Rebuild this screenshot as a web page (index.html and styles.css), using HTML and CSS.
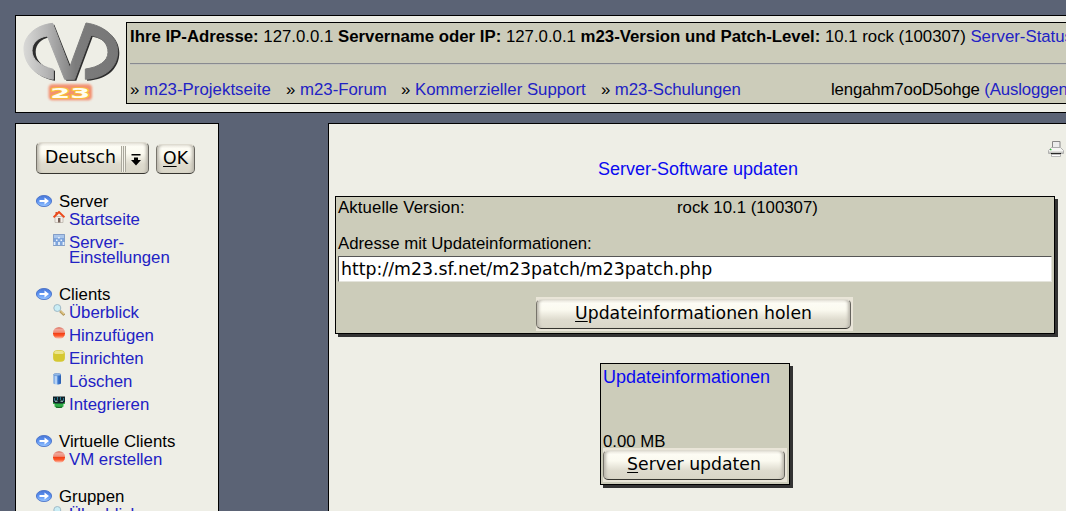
FILE: index.html
```html
<!DOCTYPE html>
<html lang="de">
<head>
<meta charset="utf-8">
<title>m23 – Server-Software updaten</title>
<link rel="stylesheet" href="styles.css">
</head>
<body>
<svg width="0" height="0" class="defs">
  <defs>
    <linearGradient id="gBlue" x1="0" y1="0" x2="0" y2="1"><stop offset="0" stop-color="#4b78d6"/><stop offset=".5" stop-color="#5b92f2"/><stop offset="1" stop-color="#9cc8ff"/></linearGradient>
    <linearGradient id="gRed" x1="0" y1="0" x2="0" y2="1"><stop offset="0" stop-color="#dc6a58"/><stop offset=".2" stop-color="#f0a598"/><stop offset=".45" stop-color="#f08a74"/><stop offset=".5" stop-color="#f03c14"/><stop offset=".75" stop-color="#ff5a2c"/><stop offset="1" stop-color="#f6d0c4"/></linearGradient>
    <linearGradient id="gLogo" x1="0" y1="0" x2="1" y2="0"><stop offset="0" stop-color="#d8d8d6"/><stop offset=".25" stop-color="#b4b4b4"/><stop offset=".55" stop-color="#7c7c7c"/><stop offset="1" stop-color="#777"/></linearGradient>
    <linearGradient id="gBin" x1="0" y1="0" x2="1" y2="0"><stop offset="0" stop-color="#5a92dc"/><stop offset=".35" stop-color="#d4e8fc"/><stop offset=".6" stop-color="#3e7cd4"/><stop offset="1" stop-color="#2a5cae"/></linearGradient>
    <filter id="glow" x="-20%" y="-30%" width="140%" height="160%"><feGaussianBlur stdDeviation="2.5"/></filter>
    <symbol id="arrow" viewBox="0 0 16 12"><ellipse cx="8" cy="6" rx="7.6" ry="5.6" fill="url(#gBlue)" stroke="#3e68c4" stroke-width=".8"/><path d="M3.5 5h5V2.6L13 6 8.500 9.400V7h-5z" fill="#fff"/></symbol>
    <symbol id="home" viewBox="0 0 12 12"><path d="M2 5.500h8V11.500H2z" fill="#f3eee8" stroke="#b5ada5" stroke-width=".7"/><path d="M2.500 1h1.700v3H2.500z" fill="#d8522c"/><path d="M.6 6.300 6 1l5.400 5.300" fill="none" stroke="#ec4a1c" stroke-width="1.900"/><path d="M5 7h2.400v4.500H5z" fill="#776258"/></symbol>
    <symbol id="prefs" viewBox="0 0 12 12"><path d="M.4.4h11.200v11.200H.4z" fill="#7fa5dc" stroke="#7391be" stroke-width=".8"/><path d="M1 1h10v3H1z" fill="#aac6eb"/><path d="M1.500 11V8M6 11V8M10.500 11V8" stroke="#e6effb" stroke-width="1.800"/><path d="M3 5.500h1.500v1.500H3zM7.500 5.500H9v1.500H7.500zM5.200 3h1.500v1.500H5.200z" fill="#f0f5fc"/></symbol>
    <symbol id="find" viewBox="0 0 12 12"><path d="m7 7 4.300 4" stroke="#b79a5c" stroke-width="2.400"/><path d="m7.500 7 3.500 3.200" stroke="#f2dc98" stroke-width="1"/><circle cx="4.300" cy="4" r="3.500" fill="#c9edf5" stroke="#9fb9c6"/></symbol>
    <symbol id="red" viewBox="0 0 12 12"><rect x="0" y=".3" width="12" height="11.400" rx="5.500" ry="5.200" fill="url(#gRed)"/></symbol>
    <symbol id="yellow" viewBox="0 0 12 12"><rect x=".1" y=".3" width="11.800" height="11.400" rx="4" fill="#d5c832"/><rect x="1.200" y="1" width="9.600" height="3" rx="1.500" fill="#ece58d"/></symbol>
    <symbol id="bin" viewBox="0 0 12 12"><path d="M.5 1.500v9c1.500 1.300 6 1.300 7.500 0v-9z" fill="url(#gBin)"/><ellipse cx="4.250" cy="1.600" rx="3.700" ry="1.200" fill="#92b9e8" stroke="#4f7fc2" stroke-width=".5"/></symbol>
    <symbol id="integrate" viewBox="0 0 12 12"><path d="M0 5h12v3H10.500v2.500L8.500 12h-5l-2-1.500V8H0z" fill="#2fae46"/><path d="M0 .5h12v5.500L10 7.500H2L0 6z" fill="#102028"/><path d="M1.500 2v3m3-4v3m3-3v3m3-2v3" stroke="#28788c" stroke-width="1"/><path d="M2 5.200h2.500m3 0H10" stroke="#b9dce0"/><path d="M3 11q3 1 6 0" fill="none" stroke="#175c26"/></symbol>
    <symbol id="printer" viewBox="0 0 16 16"><path d="M4.500.5h7.500v6h-7.500z" fill="#ececec" stroke="#888"/><path d="M3.500 6.500h9L15.500 9.500v3H.5V9.500z" fill="#f6f6f4" stroke="#aaa" stroke-width=".9"/><path d="M1 10.500h14v1.500H1z" fill="#c8c8c5"/><path d="M3 12h10v1.300H3z" fill="#111"/><path d="M3.500 13.300h9v2.200h-9z" fill="#fff" stroke="#aaa" stroke-width=".8"/><path d="M2 8h1.500v1.200H2z" fill="#32c83c"/></symbol>
  </defs>
</svg>

<header class="panel header">
  <svg class="logo" viewBox="0 0 315 270" role="img">
    <path transform="translate(5 4)" fill="#2e2e2e" d="M98 16C40 22 10 60 12 95C14 145 55 178 100 184V154C65 145 42 125 42 98C42 75 58 60 82 54L134 184H164L213 52C250 58 264 80 264 103C264 130 235 148 196 153V184C260 180 293 145 293 100C293 55 250 22 198 15L149 145Z"/>
    <path fill="url(#gLogo)" stroke="url(#gLogo)" stroke-width="3" d="M98 16C40 22 10 60 12 95C14 145 55 178 100 184V154C60 143 36 125 36 98C36 75 54 58 82 54L134 184H164L213 52C250 58 264 80 264 103C264 130 235 148 196 153V184C260 180 293 145 293 100C293 55 250 22 198 15L149 148Z"/>
    <rect x="86" y="199" width="130" height="48" rx="12" fill="#f4805c" opacity=".85" filter="url(#glow)"/>
    <text class="logo-num" x="91" y="240" textLength="120" lengthAdjust="spacingAndGlyphs">23</text>
  </svg>
  <div class="info">
    <div class="line"><b>Ihre IP-Adresse:</b> 127.0.0.1 <b>Servername oder IP:</b> 127.0.0.1 <b>m23-Version und Patch-Level:</b> 10.1 rock (100307) <a>Server-Status</a></div>
    <hr>
    <div class="line links"><span class="l1">» <a>m23-Projektseite</a></span><span class="l2">» <a>m23-Forum</a></span><span class="l3">» <a>Kommerzieller Support</a></span><span class="l4">» <a>m23-Schulungen</a></span><span class="user">lengahm7ooD5ohge <a>(Ausloggen)</a></span></div>
  </div>
</header>

<div class="columns">
  <nav class="panel side">
    <div class="lang">
      <div class="btn select"><span>Deutsch</span><i class="grip"></i><svg class="drop" viewBox="0 0 10 12"><path d="M.5 0h9v1.500h-9zM3 3.500h4V6h3L5 11.500 0 6h3z"/></svg></div>
      <div class="btn ok"><span><u>O</u>K</span></div>
    </div>
    <section>
      <h2><svg><use href="#arrow"/></svg>Server</h2>
      <a class="item"><svg><use href="#home"/></svg>Startseite</a>
      <a class="item"><svg><use href="#prefs"/></svg><span>Server-<br>Einstellungen</span></a>
    </section>
    <section>
      <h2><svg><use href="#arrow"/></svg>Clients</h2>
      <a class="item"><svg><use href="#find"/></svg>Überblick</a>
      <a class="item"><svg><use href="#red"/></svg>Hinzufügen</a>
      <a class="item"><svg><use href="#yellow"/></svg>Einrichten</a>
      <a class="item"><svg><use href="#bin"/></svg>Löschen</a>
      <a class="item"><svg><use href="#integrate"/></svg>Integrieren</a>
    </section>
    <section>
      <h2><svg><use href="#arrow"/></svg>Virtuelle Clients</h2>
      <a class="item"><svg><use href="#red"/></svg>VM erstellen</a>
    </section>
    <section>
      <h2><svg><use href="#arrow"/></svg>Gruppen</h2>
      <a class="item"><svg><use href="#find"/></svg>Überblick</a>
    </section>
  </nav>

  <main class="panel main">
    <div class="tools"><svg class="print"><use href="#printer"/></svg></div>
    <h1>Server-Software updaten</h1>
    <div class="box form">
      <div class="row"><span>Aktuelle Version:</span><span>rock 10.1 (100307)</span></div>
      <div class="label">Adresse mit Updateinformationen:</div>
      <div class="field">http://m23.sf.net/m23patch/m23patch.php</div>
      <div class="plate fetch"><div class="btn"><span><u>U</u>pdateinformationen holen</span></div></div>
    </div>
    <div class="box update">
      <div class="title">Updateinformationen</div>
      <div class="size">0.00 MB</div>
      <div class="plate"><div class="btn"><span><u>S</u>erver updaten</span></div></div>
    </div>
  </main>
</div>
</body>
</html>
```

FILE: styles.css
```css
* { box-sizing: border-box; }
html { height: 511px; overflow: hidden; }
body {
  margin: 0;
  width: 1066px;
  height: 511px;
  padding: 15px 0 0 15px;
  overflow: hidden;
  background: #5b6375;
  color: #000;
  font: 16.8px/18px "Liberation Sans", Arial, sans-serif;
}
svg { display: block; flex: none; }
.defs { position: absolute; }
a { color: #2222c4; }
.panel { flex: none; background: #eeeee6; border: 1px solid #000; }

.header {
  display: flex;
  width: 1100px;
  height: 98px;
  padding: 6px 0 0 4px;
}
.logo { width: 105px; height: 90px; margin-top: -4px; }
.logo-num {
  font: bold 44px "DejaVu Sans", sans-serif;
  fill: #fffdf0;
  stroke: #f8c038;
  stroke-width: 5px;
  paint-order: stroke;
}
.info {
  width: 990px;
  height: 82px;
  margin-left: 1px;
  padding: 5px 3px 0;
  background: #ccccba;
  border: 1px solid #000;
  white-space: nowrap;
}
.info hr {
  height: 2px;
  margin: 17px 0 16px;
  border: 0;
  border-top: 1px solid #888a90;
  border-bottom: 1px solid #c4c4bc;
}
.links { display: flex; }
.l1 { width: 156px; letter-spacing: 0.05px; }
.l2 { width: 115px; }
.l3 { width: 200px; }
.l4 { width: 230px; letter-spacing: -0.07px; }
.user { letter-spacing: -0.15px; }

.columns { display: flex; gap: 109px; margin-top: 10px; }
.side { width: 204px; height: 400px; padding: 18px 0 0 20px; }
.lang { display: flex; gap: 7px; margin-bottom: 19px; }
.btn {
  display: flex;
  align-items: center;
  justify-content: center;
  height: 31px;
  border: 1px solid #b8b5aa;
  border-top-color: #dedbd0;
  border-bottom: 1px solid #35342f;
  border-right-color: #66645e;
  border-left-color: #77746b;
  border-radius: 5px;
  background: linear-gradient(#e8e5dc 0, #fdfcf4 12%, #fbfaf0 35%, #dedbce 70%, #d9d6c8 100%);
  box-shadow: inset 4px 0 3px -2px #bbb8ae, inset -4px 0 3px -2px #bbb8ae;
  font: 17.25px/20px "DejaVu Sans", sans-serif;
}
u { text-decoration-thickness: 1px; text-underline-offset: 2px; }
.select { width: 113px; height: 32px; padding-bottom: 3px; justify-content: flex-start; padding-left: 8px; }
.grip { width: 5px; height: 26px; margin: 4px 5px 0 5px; border: solid #aaa89d; border-width: 0 1px; background: linear-gradient(90deg, #f4f2e8 1px, #aaa89d 1px 2px, #f4f2e8 2px); }
.drop { width: 10px; height: 12px; margin-top: 6px; }
.ok { width: 39px; height: 30px; margin-top: 2px; padding-bottom: 2px; }

section { margin-bottom: 21px; }
h2 { display: flex; align-items: center; gap: 7px; height: 18px; margin: 0; font-size: 16.8px; font-weight: normal; }
h2 svg { width: 16px; height: 12px; margin-top: -3px; }
.item { display: flex; gap: 4px; padding-left: 17px; line-height: 15px; margin: 1px 0 8px; }
.item svg { width: 12px; height: 12px; margin-top: -1px; }

.main { width: 780px; height: 400px; padding: 17px 0 0 6px; }
.tools { display: flex; height: 18px; padding-left: 713px; }
.print { width: 16px; height: 16px; }
h1 { width: 726px; height: 20px; margin: 0 0 17px; text-align: center; color: #0a0af0; font-size: 18px; font-weight: normal; line-height: 20px; }
.box { background: #ccccba; border: 1px solid #000; box-shadow: 3px 3px 0 #333; }
.form { width: 720px; height: 138px; padding: 2px; }
.row { display: grid; grid-template-columns: 339px auto; height: 36px; }
.row span:first-child { letter-spacing: 0.1px; }
.label { height: 21px; }
.field {
  width: 714px;
  height: 26px;
  padding-left: 2px;
  background: #fff;
  border: 1px solid #e4e4dc;
  border-top-color: #555;
  border-left-color: #555;
  font: 17.33px/24px "DejaVu Sans", sans-serif;
}
.plate { padding: 2px 2px 2px 0; background: #e9e5d8; }
.plate .btn { height: 30px; padding-bottom: 3px; }
.fetch { width: 317px; margin: 15px 0 0 198px; }
.update { width: 190px; height: 122px; margin: 29px 0 0 265px; padding: 4px 2px 0; }
.title { height: 65px; color: #0a0af0; font-size: 18px; }
.size { height: 15px; }
.update .plate { width: 184px; }
```
